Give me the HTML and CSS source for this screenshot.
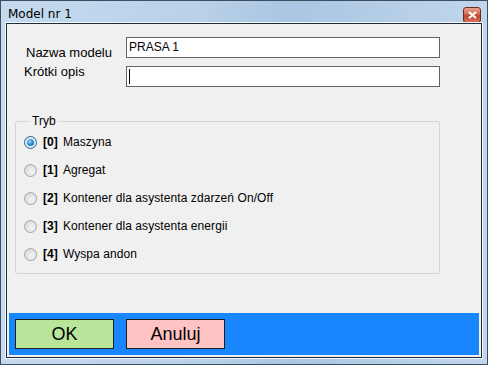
FILE: index.html
```html
<!DOCTYPE html>
<html lang="pl">
  <head>
    <meta charset="UTF-8" />
    <title>Model nr 1</title>
    <link rel="stylesheet" href="styles.css">
  </head>
  <body>
    <div class="window">
      <div class="titlebar">
        <span class="title">Model nr 1</span>
        <span class="close">
          <svg width="9" height="8" viewBox="0 0 9 8">
            <path d="M1 1 L8 7 M8 1 L1 7" stroke="#fff" stroke-width="2" />
          </svg>
        </span>
      </div>
      <div class="client">
        <div class="fields">
          <div class="labels">
            <div class="label">Nazwa modelu</div>
            <div class="label">Krótki opis</div>
          </div>
          <div class="inputs">
            <div class="input">PRASA 1</div>
            <div class="input"><span class="caret"></span></div>
          </div>
        </div>

        <fieldset class="mode">
          <legend>Tryb</legend>
          <div class="option"><span class="radio checked"></span><b>[0]</b> Maszyna</div>
          <div class="option"><span class="radio"></span><b>[1]</b> Agregat</div>
          <div class="option"><span class="radio"></span><b>[2]</b> Kontener dla asystenta zdarzeń On/Off</div>
          <div class="option"><span class="radio"></span><b>[3]</b> Kontener dla asystenta energii</div>
          <div class="option"><span class="radio"></span><b>[4]</b> Wyspa andon</div>
        </fieldset>

        <div class="actions">
          <button class="ok">OK</button>
          <button class="cancel">Anuluj</button>
        </div>
      </div>
    </div>
  </body>
</html>
```

FILE: styles.css
```css
body {
  margin: 0;
  font-family: "Liberation Sans", Arial, sans-serif;
}
.window {
  width: 488px;
  height: 365px;
  box-sizing: border-box;
  border: 1px solid #3c4e60;
  background: linear-gradient(90deg, #c5daee 0%, #b9d1e9 40%, #aac6e2 60%, #c0d6ec 100%);
  padding: 0 5px;
}
.titlebar {
  height: 22px;
  display: flex;
  align-items: center;
  justify-content: space-between;
}
.title {
  font-family: "DejaVu Sans", sans-serif;
  font-size: 12px;
  color: #000;
  padding-left: 2px;
  padding-top: 4px;
}
.close {
  width: 18px;
  height: 16px;
  margin-top: 5px;
  margin-right: 1px;
  border: 1px solid #6b2a1f;
  border-radius: 3px;
  box-sizing: border-box;
  background: linear-gradient(#e8a08f 0%, #d26b55 45%, #c2442c 55%, #d8725a 100%);
  display: flex;
  align-items: center;
  justify-content: center;
}
.client {
  height: 335px;
  box-sizing: border-box;
  border: 1px solid #1e2b38;
  outline: 1px solid #f4f8fc;
  background: #f0f0f0;
  padding: 0 2px 2px;
  display: flex;
  flex-direction: column;
}
.fields {
  display: flex;
  padding-left: 17px;
  height: 63px;
  margin-bottom: 27px;
}
.labels {
  width: 100px;
  padding-top: 21px;
  display: flex;
  flex-direction: column;
  gap: 4px;
}
.label {
  font-size: 13px;
  line-height: 15px;
  color: #000;
}
.label + .label {
  margin-left: -2px;
}
.inputs {
  padding-top: 13px;
  display: flex;
  flex-direction: column;
  gap: 8px;
}
.input {
  width: 314px;
  height: 21px;
  box-sizing: border-box;
  border: 1px solid #646464;
  background: #fff;
  font-size: 12px;
  line-height: 19px;
  padding-left: 2px;
  display: flex;
  align-items: center;
}
.caret {
  width: 1px;
  height: 15px;
  background: #000;
}
.mode {
  margin: 0 0 0 6px;
  width: 425px;
  height: 160px;
  box-sizing: border-box;
  border: 1px solid #d5d5d5;
  border-radius: 2px;
  padding: 4px 0 0 8px;
  font-size: 12px;
  letter-spacing: 0.08px;
}
.mode legend {
  padding: 0 3px;
  margin-left: 5px;
  color: #000;
  letter-spacing: 0;
}
.option {
  height: 28px;
  display: flex;
  align-items: center;
  gap: 6px;
  color: #000;
  margin-top: -8px;
  margin-bottom: 8px;
}
.option:first-of-type {
  margin-top: -4px;
}
.option b {
  margin-right: -1px;
}
.radio {
  width: 13px;
  height: 13px;
  box-sizing: border-box;
  border-radius: 50%;
  border: 1px solid #a2a2a2;
  background: radial-gradient(circle at 60% 65%, #f4f4f4 0%, #dcdcdc 70%, #cfcfcf 100%);
  position: relative;
}
.radio.checked {
  border-color: #2c628b;
  background: radial-gradient(circle at 50% 50%, #e8f4fb 0%, #d2e6f2 100%);
}
.radio.checked::after {
  content: "";
  position: absolute;
  left: 2px;
  top: 2px;
  width: 7px;
  height: 7px;
  border-radius: 50%;
  background: radial-gradient(circle at 40% 35%, #9bd9f7 0%, #2a8cd0 50%, #15517f 100%);
}
.actions {
  margin-top: auto;
  height: 42px;
  background: #1887fe;
  display: flex;
  align-items: center;
  gap: 12px;
  padding-left: 6px;
}
.actions button {
  width: 99px;
  height: 30px;
  border: 1px solid #1e1e1e;
  font-family: "Liberation Sans", Arial, sans-serif;
  font-size: 18px;
  color: #000;
  padding: 0;
}
.ok {
  background: #b9e59a;
}
.cancel {
  background: #ffc3c3;
}
```
